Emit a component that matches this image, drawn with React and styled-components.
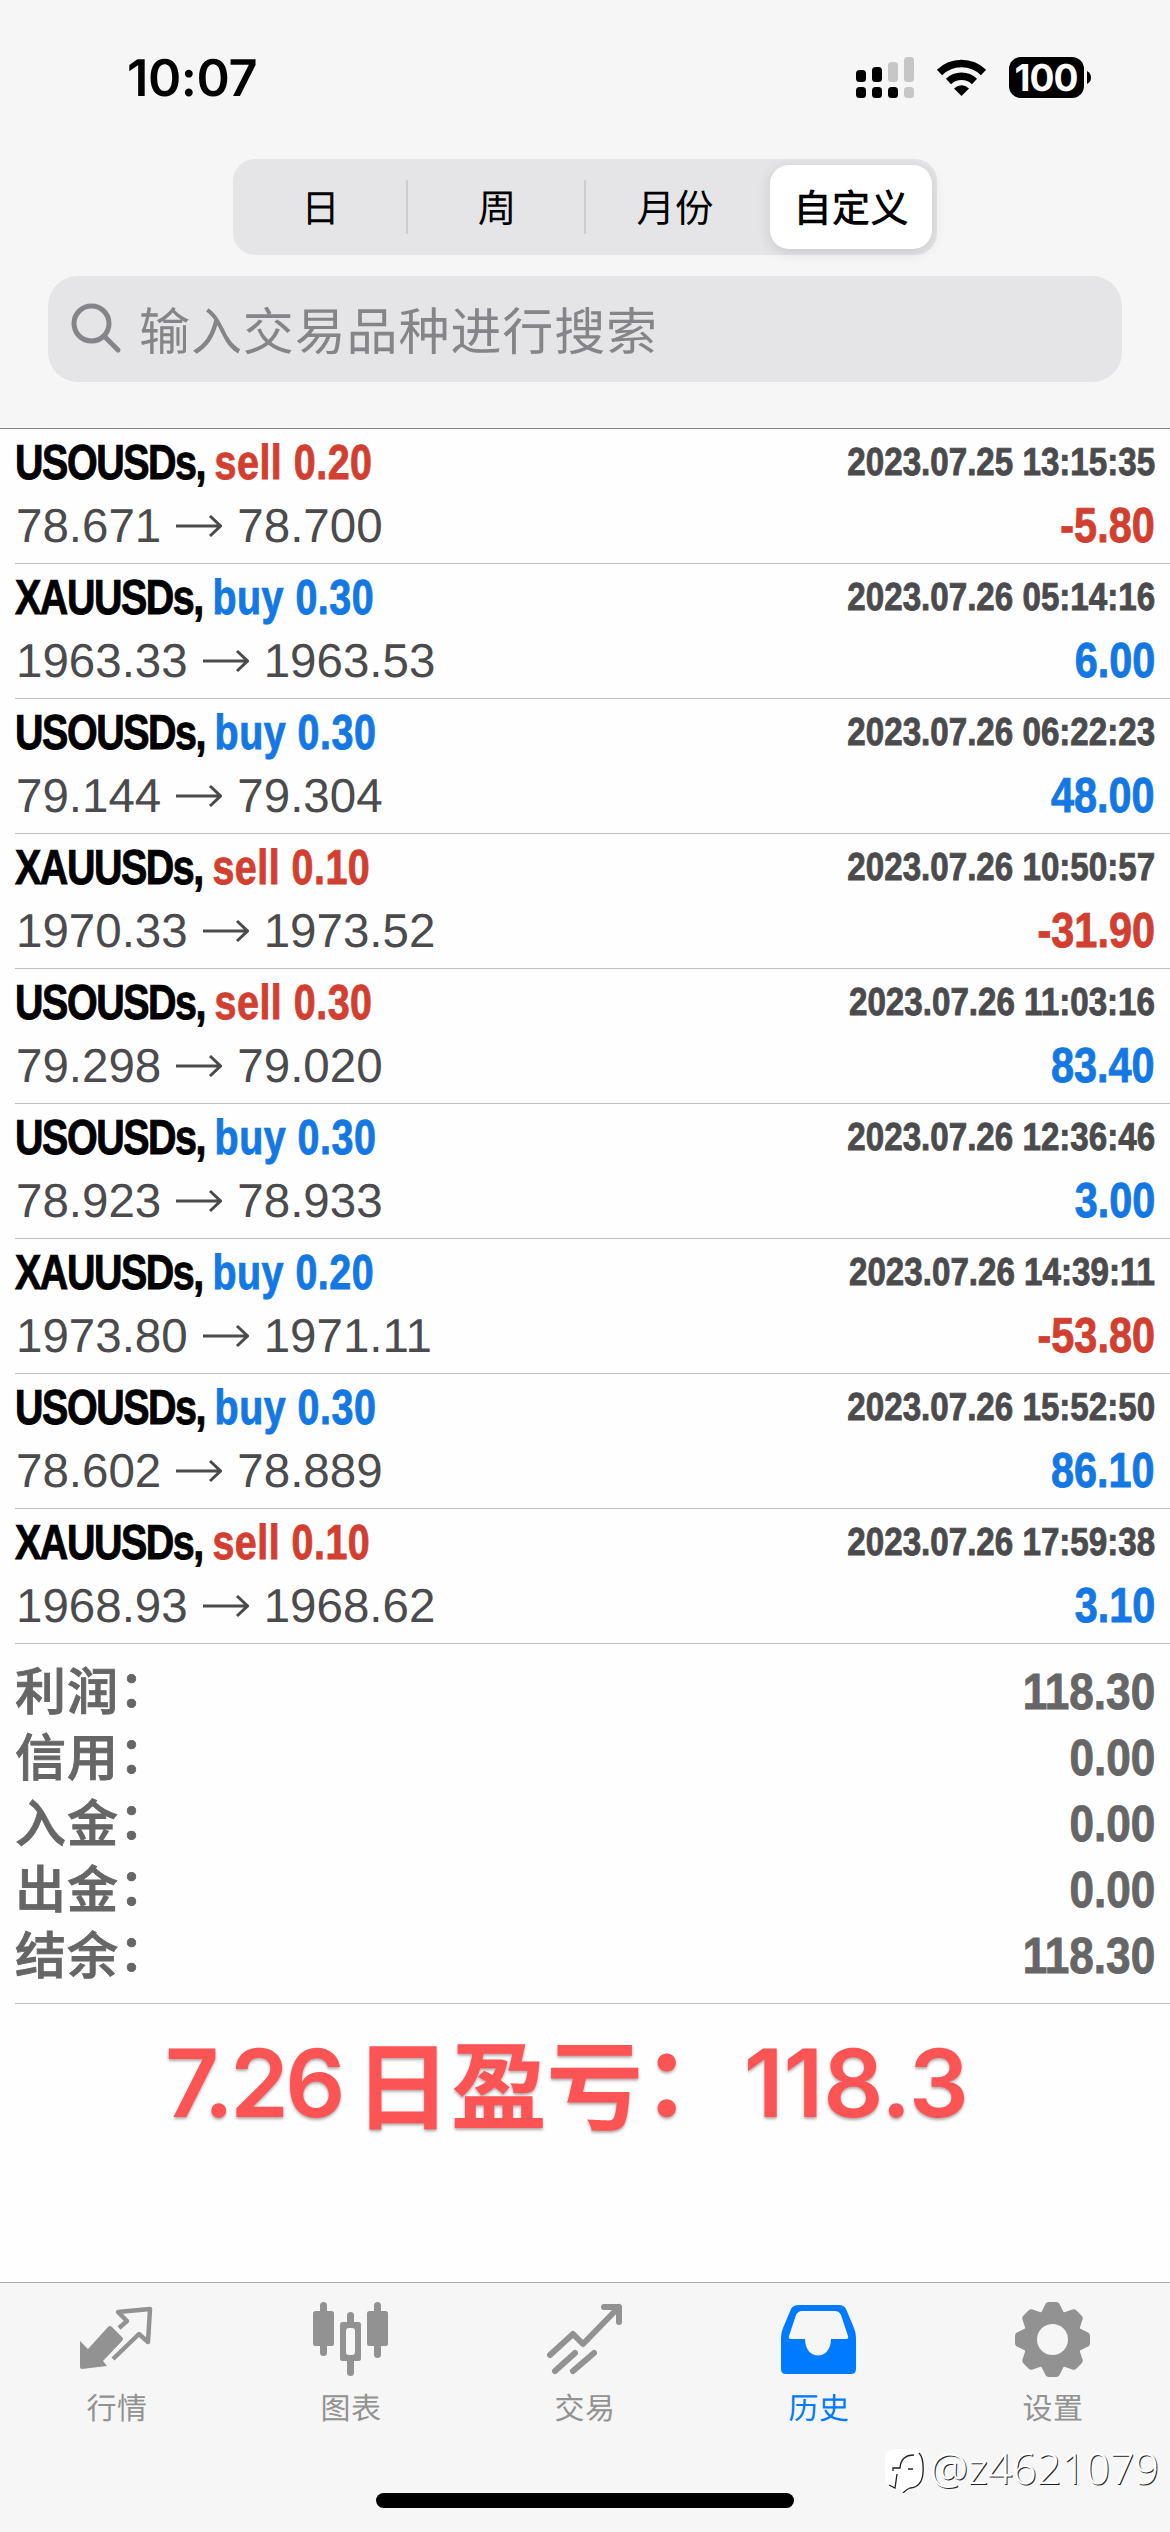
import React from "react"
import styled, { createGlobalStyle, css } from "styled-components"

const GlobalStyle = createGlobalStyle`
  * {
    box-sizing: border-box;
  }
  body {
    margin: 0;
    background: #fff;
    font-family: "Liberation Sans", "Noto Sans CJK SC", sans-serif;
    text-rendering: geometricPrecision;
  }
`

const Page = styled.div`
  width: 1170px;
  height: 2532px;
  display: flex;
  flex-direction: column;
  overflow: hidden;
  background: #fefefe;
`

const Header = styled.header`
  height: 429px;
  background: #f6f6f6;
  border-bottom: 1px solid #88888a;
`

const StatusBar = styled.div`
  height: 159px;
  padding: 46px 78px 0 127px;
  display: flex;
  justify-content: space-between;
`

const Clock = styled.div`
  height: 64px;
  font: 600 50.5px/66px Inter, sans-serif;
  letter-spacing: -0.4px;
  color: #000;
`

const StatusIcons = styled.svg`
  width: 236px;
  height: 42px;
  margin-top: 11px;
  overflow: visible;
`

const Segments = styled.div`
  width: 704px;
  height: 96px;
  margin: 0 auto;
  padding: 6px 5px 6px 0;
  display: grid;
  grid-template-columns: 175px 178px 178px 168px;
  border-radius: 22px;
  background: #e5e5e8;
`

const Segment = styled.div`
  display: flex;
  align-items: center;
  justify-content: center;
  padding-bottom: 3px;
  font: ${p => p.$active ? 500 : 400} 38.5px/50px "Noto Sans CJK SC", sans-serif;
  color: #000;
  ${p => p.$divided && css`
    background: linear-gradient(#cdcdd0, #cdcdd0) right 15px / 2px 54px no-repeat;
  `}
  ${p => p.$active && css`
    margin-left: 6px;
    border-radius: 19px;
    background: #fff;
    box-shadow: 0 3px 14px rgba(0, 0, 0, 0.13);
  `}
`

const SearchBox = styled.div`
  height: 106px;
  margin: 21px 48px 0;
  padding: 0 0 3px 22px;
  display: flex;
  align-items: center;
  gap: 17px;
  border-radius: 30px;
  background: #e5e5e7;
  color: #858589;
  font: 400 51px/70px "Noto Sans CJK SC", sans-serif;
  letter-spacing: 0.9px;
`

const SearchIcon = styled.svg`
  width: 52px;
  height: 52px;
  fill: none;
  stroke: #858589;
  stroke-width: 5;
  stroke-linecap: round;
`

const Deal = styled.div`
  height: 135px;
  margin-left: 15px;
  padding: 3px 15px 0 0;
  border-bottom: 1px solid #bfbfc1;
`

const Line = styled.div`
  height: 63px;
  display: flex;
  justify-content: space-between;
  line-height: 63px;
  white-space: pre;
`

// squeezed Helvetica bold, thickened so the stems keep their weight
const Condensed = styled.span`
  font-weight: 700;
  transform: scaleX(${p => p.$squeeze});
  transform-origin: ${p => p.$right ? "right" : "left"} center;
  -webkit-text-stroke: 0.9px currentColor;
`

const Title = styled(Condensed)`
  font-size: 49px;
  letter-spacing: 0.6px;
  color: ${p => p.$side === "sell" ? "#d23f31" : "#1478e4"};
`

const SymbolName = styled.span`
  letter-spacing: -1.8px;
  color: #000;
`

const DealTime = styled(Condensed)`
  font-size: 39px;
  line-height: 61px;
  color: #4b4b4d;
`

const Prices = styled.span`
  padding-left: 1px;
  display: flex;
  align-items: center;
  font-size: 47.5px;
  color: #4b4b4d;
`

const ArrowIcon = styled.svg`
  width: 46px;
  height: 24px;
  margin: 0 15px 2px 15px;
  fill: none;
  stroke: currentColor;
  stroke-width: 3;
`

const Profit = styled(Condensed)`
  font-size: 49px;
  color: ${p => p.$negative ? "#d23f31" : "#1478e4"};
`

const Summary = styled.div`
  height: 360px;
  margin-left: 15px;
  padding: 14px 15px 0 0;
  border-bottom: 1px solid #bfbfc1;
`

const SummaryRow = styled.div`
  height: 66px;
  display: flex;
  justify-content: space-between;
  line-height: 67px;
  color: #666;
`

const SummaryLabel = styled.span`
  font: 500 51px/60px "Noto Sans CJK SC", sans-serif;
  letter-spacing: 0.9px;
  -webkit-text-stroke: 0.9px currentColor;
`

const Colon = styled.span`
  font-family: "Noto Sans CJK TC", sans-serif;
  font-feature-settings: "halt";
  line-height: 0;
`

const SummaryValue = styled(Condensed)`
  font-size: 51px;
`

const Note = styled.div`
  flex: 1;
  padding: 15px 0 0 165px;
  display: flex;
  font: 600 94px/128px Inter, "Noto Sans CJK SC", sans-serif;
  color: #fc5455;
  text-shadow: 0 2px 3px rgba(90, 60, 60, 0.45);
`

const NoteDate = styled.span`
  margin-right: 13px;
  letter-spacing: -3.6px;
`

const NoteCjk = styled.span`
  font: 700 96px/124px "Noto Sans CJK SC", sans-serif;
`

const NoteColon = styled(NoteCjk)`
  margin: 0 53px 0 0;
  font-family: "Noto Sans CJK TC", sans-serif;
  font-feature-settings: "halt";
  line-height: 122px;
`

const TabBar = styled.nav`
  height: 250px;
  padding-top: 15px;
  display: grid;
  grid-template-columns: repeat(5, 1fr);
  grid-template-rows: 132px 1fr;
  background: #f6f6f6;
  border-top: 1px solid #a9a9ab;
`

const Tab = styled.div`
  display: flex;
  flex-direction: column;
  align-items: center;
  font: 400 30px/44px "Noto Sans CJK SC", sans-serif;
  letter-spacing: 0.6px;
  color: ${p => p.$active ? "#007aff" : "#929292"};
`

const TabIcon = styled.svg`
  width: 80px;
  height: 80px;
  margin-bottom: 6px;
  fill: none;
  stroke-linecap: round;
  stroke-linejoin: round;
`

const HomeIndicator = styled.div`
  grid-column: 1 / -1;
  justify-self: center;
  align-self: end;
  width: 418px;
  height: 15px;
  margin-bottom: 24px;
  border-radius: 8px;
  background: #000;
`

const Watermark = styled.div`
  position: absolute;
  left: 883px;
  top: 2443px;
  display: flex;
  align-items: center;
  gap: 5px;
  font: 300 42.8px/50px "Noto Sans", sans-serif;
  color: #fff;
  text-shadow: 1px 1px 0 #222;
`

const WatermarkLogo = styled.svg`
  width: 42px;
  height: 50px;
`

const deals = [
  { symbol: "USOUSDs", side: "sell", lots: "0.20", time: "2023.07.25 13:15:35", open: "78.671", close: "78.700", profit: "-5.80" },
  { symbol: "XAUUSDs", side: "buy", lots: "0.30", time: "2023.07.26 05:14:16", open: "1963.33", close: "1963.53", profit: "6.00" },
  { symbol: "USOUSDs", side: "buy", lots: "0.30", time: "2023.07.26 06:22:23", open: "79.144", close: "79.304", profit: "48.00" },
  { symbol: "XAUUSDs", side: "sell", lots: "0.10", time: "2023.07.26 10:50:57", open: "1970.33", close: "1973.52", profit: "-31.90" },
  { symbol: "USOUSDs", side: "sell", lots: "0.30", time: "2023.07.26 11:03:16", open: "79.298", close: "79.020", profit: "83.40" },
  { symbol: "USOUSDs", side: "buy", lots: "0.30", time: "2023.07.26 12:36:46", open: "78.923", close: "78.933", profit: "3.00" },
  { symbol: "XAUUSDs", side: "buy", lots: "0.20", time: "2023.07.26 14:39:11", open: "1973.80", close: "1971.11", profit: "-53.80" },
  { symbol: "USOUSDs", side: "buy", lots: "0.30", time: "2023.07.26 15:52:50", open: "78.602", close: "78.889", profit: "86.10" },
  { symbol: "XAUUSDs", side: "sell", lots: "0.10", time: "2023.07.26 17:59:38", open: "1968.93", close: "1968.62", profit: "3.10" },
]

const totals = [
  ["利润", "118.30"],
  ["信用", "0.00"],
  ["入金", "0.00"],
  ["出金", "0.00"],
  ["结余", "118.30"],
]

const QuotesIcon = () => (
  <TabIcon viewBox="1 -10 80 80">
    <path d="M4 33 L12 41 L32 19 Q34 17 36 19 L46 29 Q48 31 46 33 L27 53 L31 58 L6 61 Q4 61 4 59 Z" fill="#929292" />
    <path d="M43 20 L51 13 L42 4 L74 1 L72 34 L63 26 L37 51" stroke="#929292" strokeWidth="4.5" strokeLinecap="butt" />
  </TabIcon>
)

const ChartIcon = () => (
  <TabIcon viewBox="0 -10 80 80">
    <g fill="#929292">
      <rect x="2" y="3" width="21" height="35" rx="2.5" />
      <rect x="56" y="3" width="21" height="35" rx="2.5" />
      <rect x="9" y="-6" width="7" height="54" rx="3.5" />
      <rect x="63" y="-6" width="7" height="56" rx="3.5" />
      <rect x="29" y="14" width="21" height="39" rx="2.5" />
      <rect x="36" y="4" width="7" height="64" rx="3.5" />
    </g>
    <rect x="35" y="20" width="9" height="27" rx="3" fill="#f6f6f6" />
  </TabIcon>
)

const TradeIcon = () => (
  <TabIcon viewBox="0 -10 80 80" stroke="#929292" strokeWidth="6">
    <path d="M5 47 L28 26 L38 36 L74 -1 M59 -1 H74 V14" />
    <path d="M10 63 L30 45 M28 63 L49 45" />
  </TabIcon>
)

const HistoryIcon = () => (
  <TabIcon viewBox="0 -10 80 80">
    <path
      fill="#007aff"
      fillRule="evenodd"
      d="M20 -3 H60 Q65 -3 67 1 L75 20 Q77 25 77 30 V61 Q77 66 72 66 H7 Q2 66 2 61 V30 Q2 25 4 20 L12 1 Q14 -3 20 -3 Z M23 3 Q19 3 17 7 L10 28 Q9 31 12 31 H26 C26 53 52 53 52 31 H67 Q70 31 69 28 L62 7 Q60 3 56 3 Z"
    />
  </TabIcon>
)

const SettingsIcon = () => (
  <TabIcon viewBox="0 -10 80 80">
    <g fill="#929292">
      {[0, 45, 90, 135, 180, 225, 270, 315].map(a => (
        <path key={a} transform={`rotate(${a} 39.5 31.5)`} d="M28 5 L32 -3 Q33 -6 36 -6 H43 Q46 -6 47 -3 L51 5 Z" />
      ))}
      <circle cx="39.5" cy="31.5" r="29.5" />
    </g>
    <circle cx="39.5" cy="31.5" r="15.5" fill="#f6f6f6" />
  </TabIcon>
)

const tabs = [
  { label: "行情", Icon: QuotesIcon },
  { label: "图表", Icon: ChartIcon },
  { label: "交易", Icon: TradeIcon },
  { label: "历史", Icon: HistoryIcon, active: true },
  { label: "设置", Icon: SettingsIcon },
]

const BatteryText = styled.text`
  font: 700 37px Inter, sans-serif;
  letter-spacing: -0.9px;
  fill: #fff;
`

const Status = () => (
  <StatusBar>
    <Clock>10:07</Clock>
    <StatusIcons viewBox="0 0 236 42">
      <rect x="0" y="13" width="10" height="12" rx="3.5" />
      <rect x="16" y="10" width="10" height="15" rx="3.5" />
      <rect x="32" y="5" width="10" height="20" rx="3.5" fill="#c6c6c6" />
      <rect x="48" y="0" width="10" height="25" rx="3.5" fill="#c6c6c6" />
      <rect x="0" y="30" width="10" height="11" rx="3.5" />
      <rect x="16" y="30" width="10" height="11" rx="3.5" />
      <rect x="32" y="30" width="10" height="11" rx="3.5" />
      <rect x="48" y="30" width="10" height="11" rx="3.5" fill="#c6c6c6" />
      <g fill="none" stroke="#000" strokeWidth="7.5">
        <path d="M83.5 15.5 A31.5 31.5 0 0 1 127.5 15.5" />
        <path d="M92.5 24.5 A19 19 0 0 1 118.5 24.5" />
      </g>
      <path d="M98 31.5 Q105.5 25 113 31.5 L105.5 39 Z" />
      <rect x="153" y="0" width="75" height="41" rx="12" />
      <path d="M231 14 Q235 16 235 20.5 Q235 25 231 27 Z" />
      <BatteryText x="190" y="34" textAnchor="middle">100</BatteryText>
    </StatusIcons>
  </StatusBar>
)

const DealRow = ({ deal }) => (
  <Deal>
    <Line>
      <Title $squeeze={0.805} $side={deal.side}>
        <SymbolName>{deal.symbol}, </SymbolName>
        {deal.side} {deal.lots}
      </Title>
      <DealTime $squeeze={0.85} $right>{deal.time}</DealTime>
    </Line>
    <Line>
      <Prices>
        {deal.open}
        <ArrowIcon viewBox="0 0 46 24">
          <path d="M0 12 H44 M34 2 L44.5 12 L34 22" />
        </ArrowIcon>
        {deal.close}
      </Prices>
      <Profit $squeeze={0.845} $right $negative={deal.profit.startsWith("-")}>{deal.profit}</Profit>
    </Line>
  </Deal>
)

const App = () => {
  return (
    <>
      <GlobalStyle />
      <Page>
        <Header>
          <Status />
          <Segments>
            <Segment $divided>日</Segment>
            <Segment $divided>周</Segment>
            <Segment>月份</Segment>
            <Segment $active>自定义</Segment>
          </Segments>
          <SearchBox>
            <SearchIcon viewBox="0 0 52 52">
              <circle cx="21.5" cy="21.5" r="17.5" />
              <path d="M34 34 L48 48" />
            </SearchIcon>
            输入交易品种进行搜索
          </SearchBox>
        </Header>

        {deals.map(deal => <DealRow key={deal.time} deal={deal} />)}

        <Summary>
          {totals.map(([label, value]) => (
            <SummaryRow key={label}>
              <SummaryLabel>{label}<Colon>：</Colon></SummaryLabel>
              <SummaryValue $squeeze={0.865} $right>{value}</SummaryValue>
            </SummaryRow>
          ))}
        </Summary>

        <Note>
          <NoteDate>7.26</NoteDate>
          <NoteCjk>日盈亏</NoteCjk>
          <NoteColon>：</NoteColon>
          118.3
        </Note>

        <TabBar>
          {tabs.map(({ label, Icon, active }) => (
            <Tab key={label} $active={active}>
              <Icon />
              {label}
            </Tab>
          ))}
          <HomeIndicator />
        </TabBar>
      </Page>

      <Watermark>
        <WatermarkLogo viewBox="0 0 42 50">
          <path d="M12 6 H28 Q38 6 38 18 V32 Q38 44 26 45 L18 50 L17 45 Q2 46 2 32 V18 Q2 6 12 6 Z" fill="#fff" />
          <path
            d="M31 12 Q18 12 17 25 H10 V28 M14 31 L12 45 L6 42 M25 26 H30 M36 10 Q41 15 40 30 Q39 44 27 45 Q24 46 20 50"
            fill="none"
            stroke="#222"
            strokeWidth="1.3"
          />
        </WatermarkLogo>
        @z4621079
      </Watermark>
    </>
  )
}

export default App
